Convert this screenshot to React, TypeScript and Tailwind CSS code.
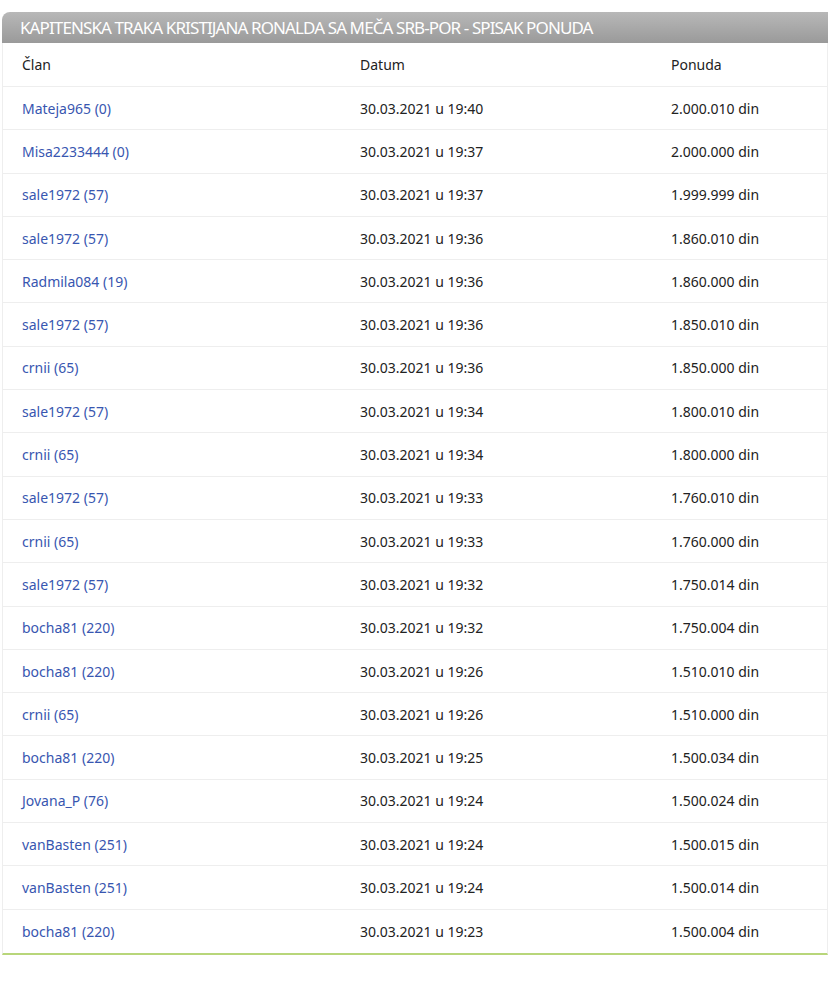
import React from 'react';

const rows: [string, string, string][] = [
  ['Mateja965 (0)', '30.03.2021 u 19:40', '2.000.010 din'],
  ['Misa2233444 (0)', '30.03.2021 u 19:37', '2.000.000 din'],
  ['sale1972 (57)', '30.03.2021 u 19:37', '1.999.999 din'],
  ['sale1972 (57)', '30.03.2021 u 19:36', '1.860.010 din'],
  ['Radmila084 (19)', '30.03.2021 u 19:36', '1.860.000 din'],
  ['sale1972 (57)', '30.03.2021 u 19:36', '1.850.010 din'],
  ['crnii (65)', '30.03.2021 u 19:36', '1.850.000 din'],
  ['sale1972 (57)', '30.03.2021 u 19:34', '1.800.010 din'],
  ['crnii (65)', '30.03.2021 u 19:34', '1.800.000 din'],
  ['sale1972 (57)', '30.03.2021 u 19:33', '1.760.010 din'],
  ['crnii (65)', '30.03.2021 u 19:33', '1.760.000 din'],
  ['sale1972 (57)', '30.03.2021 u 19:32', '1.750.014 din'],
  ['bocha81 (220)', '30.03.2021 u 19:32', '1.750.004 din'],
  ['bocha81 (220)', '30.03.2021 u 19:26', '1.510.010 din'],
  ['crnii (65)', '30.03.2021 u 19:26', '1.510.000 din'],
  ['bocha81 (220)', '30.03.2021 u 19:25', '1.500.034 din'],
  ['Jovana_P (76)', '30.03.2021 u 19:24', '1.500.024 din'],
  ['vanBasten (251)', '30.03.2021 u 19:24', '1.500.015 din'],
  ['vanBasten (251)', '30.03.2021 u 19:24', '1.500.014 din'],
  ['bocha81 (220)', '30.03.2021 u 19:23', '1.500.004 din'],
];

export default function App() {
  return (
    <div className="w-[830px] h-[981px] bg-white pt-[12px] pl-[2px] pr-[2px] font-['Liberation_Sans'] text-[14px] text-[#222]">
      <div className="h-[31px] rounded-tl-[8px] bg-gradient-to-b from-[#b8b8b8] to-[#9a9a9a] flex items-center pl-[18px] text-white text-[17px] tracking-[-0.9px] whitespace-nowrap">
        KAPITENSKA TRAKA KRISTIJANA RONALDA SA MEČA SRB-POR - SPISAK PONUDA
      </div>
      <div className="border-l border-r border-[#eeeeee] border-b-2 border-b-[#b8d67a]">
        <div className="h-[44px] flex items-center border-b border-[#eeeeee]">
          <div className="w-[357px] pl-[19px]">Član</div>
          <div className="w-[311px]">Datum</div>
          <div>Ponuda</div>
        </div>
        {rows.map((r, i) => (
          <div key={i} className={`h-[43.3px] flex items-center ${i < rows.length - 1 ? 'border-b border-[#eeeeee]' : ''}`}>
            <div className="w-[357px] pl-[19px] text-[#3856b0]">{r[0]}</div>
            <div className="w-[311px]">{r[1]}</div>
            <div>{r[2]}</div>
          </div>
        ))}
      </div>
    </div>
  );
}
